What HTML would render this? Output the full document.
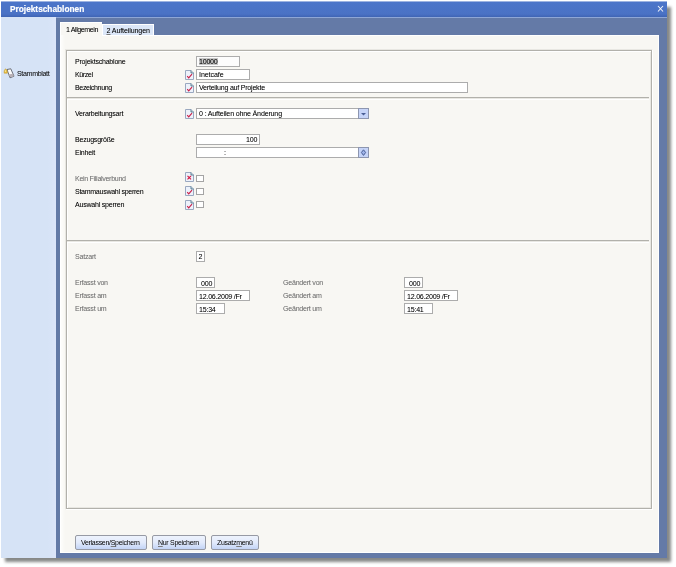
<!DOCTYPE html>
<html><head><meta charset="utf-8">
<style>
*{margin:0;padding:0;box-sizing:border-box}
html,body{width:676px;height:567px;background:#fff;overflow:hidden;position:relative;font-family:"Liberation Sans",sans-serif;font-size:7px;color:#1a1a1a}
.a{position:absolute}
.t{position:absolute;white-space:nowrap;font-size:7px;line-height:8px;letter-spacing:-0.2px;color:#000;text-shadow:0.3px 0 0 rgba(0,0,0,0.22)}
.g{color:#707070;text-shadow:0.3px 0 0 rgba(112,112,112,0.22)}
.box{position:absolute;background:#fff;border:1px solid #acacac;}
.ico{position:absolute;width:9px;height:10px}
.chk{position:absolute;width:8px;height:7px;border:1px solid #a4a4a4;background:#fff}
.btn{position:absolute;height:15px;border:1px solid #979aa4;border-radius:2px;background:linear-gradient(#eef3fd,#e2eafb 50%,#c3d4f6);}
.btn span{position:absolute;white-space:nowrap;font-size:7px;letter-spacing:-0.3px;line-height:8px;color:#000}
u{text-decoration:underline #7a7a7a}
</style></head><body>
<div id="root" style="position:absolute;left:0;top:0;width:676px;height:567px;filter:blur(0.3px)">
<!-- shadow -->
<div class="a" style="left:5px;top:7px;width:666px;height:555px;background:#878988;filter:blur(1.5px)"></div>
<!-- window -->
<div class="a" style="left:1px;top:2px;width:666px;height:556px;background:#647aa7"></div>
<!-- title -->
<div class="a" style="left:1px;top:1px;width:666px;height:1px;background:rgba(76,117,201,0.55)"></div>
<div class="a" style="left:1px;top:2px;width:666px;height:15px;background:linear-gradient(#4c75c9,#4a72c5 80%,#3f64b4)"></div>
<div class="a" style="left:1px;top:17px;width:666px;height:1px;background:#8ea6d6"></div>
<div class="t" style="left:10px;top:5px;font-weight:bold;font-size:8.3px;letter-spacing:0;color:#fff;-webkit-text-stroke:0.2px #fff;text-shadow:none;line-height:9px">Projektschablonen</div>
<svg class="a" style="left:656.5px;top:5px" width="7" height="8" viewBox="0 0 7 8"><path d="M1 1L6 6.5M6 1L1 6.5" stroke="#f4f6fb" stroke-width="1.05"/></svg>
<!-- sidebar -->
<div class="a" style="left:1px;top:17px;width:55px;height:541px;background:linear-gradient(90deg,#d6e3f6 85%,#dce5fa)"></div>
<svg class="a" style="left:3px;top:67.5px" width="12" height="11" viewBox="0 0 12 11"><path d="M4 1.5L7.8 0.8L11 8.2L7 9.8Z" fill="#fbfbfb" stroke="#4a4e58" stroke-width="0.8"/><path d="M5.5 6.5L9.8 5.8L10.8 8.2L7.2 9.3Z" fill="#b8b0b6"/><path d="M1.2 5.2C0.8 3.5 1.5 1.2 2.6 0.9C3.8 1.3 4.6 3.5 4.3 5.2Z" fill="#e8c040" stroke="#c09428" stroke-width="0.5"/><path d="M2.6 1.8L3.2 3.8H2Z" fill="#fff3b8"/></svg>
<div class="t" style="left:17px;top:70px;color:#111;letter-spacing:-0.3px">Stammblatt</div>
<!-- tabs -->
<div class="a" style="left:102px;top:24px;width:52px;height:11px;background:#dce7f8;border:1px solid #fff;border-bottom:none"></div>
<div class="t" style="left:106.5px;top:26.7px;letter-spacing:-0.08px"><u>2</u> Aufteilungen</div>
<div class="a" style="left:60px;top:22px;width:42px;height:14px;background:#f8f7f3;border-left:1px solid #fff;border-top:1px solid #fff"></div>
<div class="t" style="left:66px;top:25.5px;letter-spacing:-0.38px">1 Allgemein</div>
<!-- panel -->
<div class="a" style="left:60px;top:35px;width:599px;height:518px;background:linear-gradient(90deg,#fdfdfb,#f8f7f3 4px);border-left:1px solid #fff;border-right:1px solid #fff;border-bottom:1px solid #fff"></div>
<div class="a" style="left:102px;top:35px;width:557px;height:1px;background:#fff"></div>
<!-- group box -->
<div class="a" style="left:65px;top:49px;width:588px;height:461px;border:1px solid #e8e7e2;border-right-color:#fff;border-bottom-color:#fff"></div>
<div class="a" style="left:66px;top:50px;width:586px;height:459px;border:1px solid #b2b1ab;box-shadow:inset 1px 1px 0 #fff,inset -1px -1px 0 #e8e7e2"></div>
<div class="a" style="left:67px;top:97px;width:582px;height:1px;background:#b2b1ab"></div><div class="a" style="left:67px;top:98px;width:582px;height:1px;background:#e8e7e2"></div>
<div class="a" style="left:67px;top:99px;width:582px;height:1px;background:#fff"></div>
<div class="a" style="left:67px;top:240px;width:582px;height:1px;background:#b2b1ab"></div><div class="a" style="left:67px;top:241px;width:582px;height:1px;background:#e8e7e2"></div>
<div class="a" style="left:67px;top:242px;width:582px;height:1px;background:#fff"></div>

<!-- section 1 -->
<div class="t" style="left:75px;top:58px">Projektschablone</div>
<div class="t" style="left:75px;top:71px;letter-spacing:-0.38px">Kürzel</div>
<div class="t" style="left:75px;top:84px;letter-spacing:-0.33px">Bezeichnung</div>
<div class="box" style="left:196px;top:56px;width:44px;height:11px;background:#fcfcfc"></div>
<div class="a" style="left:199px;top:58px;width:19px;height:7px;background:#c6c6c6"></div>
<div class="t" style="left:199px;top:58px">10000</div>
<div class="box" style="left:196px;top:69px;width:54px;height:11px"></div>
<div class="t" style="left:199px;top:71px;letter-spacing:-0.05px">Inetcafe</div>
<div class="box" style="left:196px;top:82px;width:272px;height:11px"></div>
<div class="t" style="left:199px;top:84px">Verteilung auf Projekte</div>

<svg class="ico" style="left:185px;top:69.5px" width="9" height="10" viewBox="0 0 9 10"><defs></defs><path d="M0.5 0.5H6L8.5 3V9.5H0.5Z" fill="#edf2fb" stroke="#9aa8c0"/><path d="M6 0.5V3H8.5" fill="#d6e4ec" stroke="#4a7288" stroke-width="0.9"/><path d="M2.2 6.2L3.7 7.8L7 4.2" fill="none" stroke="#cc2048" stroke-width="1.15"/></svg><svg class="ico" style="left:185px;top:82.5px" width="9" height="10" viewBox="0 0 9 10"><defs></defs><path d="M0.5 0.5H6L8.5 3V9.5H0.5Z" fill="#edf2fb" stroke="#9aa8c0"/><path d="M6 0.5V3H8.5" fill="#d6e4ec" stroke="#4a7288" stroke-width="0.9"/><path d="M2.2 6.2L3.7 7.8L7 4.2" fill="none" stroke="#cc2048" stroke-width="1.15"/></svg>
<!-- section 2 -->
<div class="t" style="left:75px;top:110px">Verarbeitungsart</div>
<div class="box" style="left:196px;top:108px;width:173px;height:11px"></div>
<div class="t" style="left:199px;top:110px;letter-spacing:-0.13px">0 : Aufteilen ohne Änderung</div>
<svg class="a" style="left:358px;top:108px" width="11" height="11" viewBox="0 0 11 11"><rect x="0.5" y="0.5" width="10" height="10" fill="#c6d4f8" stroke="#8d96b0"/><path d="M3 5H8L5.5 7.5Z" fill="#4a5f96"/></svg>
<svg class="ico" style="left:185px;top:108.5px" width="9" height="10" viewBox="0 0 9 10"><defs></defs><path d="M0.5 0.5H6L8.5 3V9.5H0.5Z" fill="#edf2fb" stroke="#9aa8c0"/><path d="M6 0.5V3H8.5" fill="#d6e4ec" stroke="#4a7288" stroke-width="0.9"/><path d="M2.2 6.2L3.7 7.8L7 4.2" fill="none" stroke="#cc2048" stroke-width="1.15"/></svg>
<div class="t" style="left:75px;top:136px">Bezugsgröße</div>
<div class="box" style="left:196px;top:134px;width:64px;height:11px"></div>
<div class="t" style="left:246px;top:136px">100</div>
<div class="t" style="left:75px;top:149px">Einheit</div>
<div class="box" style="left:196px;top:147px;width:173px;height:11px"></div>
<div class="t" style="left:224px;top:149px">:</div>
<svg class="a" style="left:358px;top:147px" width="11" height="11" viewBox="0 0 11 11"><rect x="0.5" y="0.5" width="10" height="10" fill="#c6d4f8" stroke="#8d96b0"/><path d="M5.5 2.8L7.6 5.5L5.5 8.4L3.4 5.5Z" fill="#9fb4ea" stroke="#4a5f96" stroke-width="1"/></svg>

<div class="t g" style="left:75px;top:175px;letter-spacing:-0.28px">Kein Filialverbund</div>
<div class="t" style="left:75px;top:188px;letter-spacing:-0.26px">Stammauswahl sperren</div>
<div class="t" style="left:75px;top:201px">Auswahl sperren</div>
<div class="chk" style="left:196px;top:175px"></div>
<div class="chk" style="left:196px;top:188px"></div>
<div class="chk" style="left:196px;top:201px"></div>

<svg class="ico" style="left:184.5px;top:172px" width="9" height="10" viewBox="0 0 9 10"><path d="M0.5 0.5H6L8.5 3V9.5H0.5Z" fill="#edf2fb" stroke="#9aa8c0"/><path d="M6 0.5V3H8.5" fill="#d6e4ec" stroke="#4a7288" stroke-width="0.9"/><path d="M2.5 3.8L6 7.3M6 3.8L2.5 7.3" fill="none" stroke="#d41a44" stroke-width="1.15"/></svg><svg class="ico" style="left:184.5px;top:186.2px" width="9" height="10" viewBox="0 0 9 10"><defs></defs><path d="M0.5 0.5H6L8.5 3V9.5H0.5Z" fill="#edf2fb" stroke="#9aa8c0"/><path d="M6 0.5V3H8.5" fill="#d6e4ec" stroke="#4a7288" stroke-width="0.9"/><path d="M2.2 6.2L3.7 7.8L7 4.2" fill="none" stroke="#cc2048" stroke-width="1.15"/></svg><svg class="ico" style="left:184.5px;top:199.8px" width="9" height="10" viewBox="0 0 9 10"><defs></defs><path d="M0.5 0.5H6L8.5 3V9.5H0.5Z" fill="#edf2fb" stroke="#9aa8c0"/><path d="M6 0.5V3H8.5" fill="#d6e4ec" stroke="#4a7288" stroke-width="0.9"/><path d="M2.2 6.2L3.7 7.8L7 4.2" fill="none" stroke="#cc2048" stroke-width="1.15"/></svg>
<!-- section 3 -->
<div class="t g" style="left:75px;top:253px">Satzart</div>
<div class="box" style="left:196px;top:251px;width:9px;height:11px"></div>
<div class="t" style="left:198.5px;top:253px">2</div>

<div class="t g" style="left:75px;top:279px">Erfasst von</div>
<div class="t g" style="left:75px;top:292px">Erfasst am</div>
<div class="t g" style="left:75px;top:305px">Erfasst um</div>
<div class="box" style="left:196px;top:277px;width:19px;height:11px"></div>
<div class="t" style="left:201px;top:280px">000</div>
<div class="box" style="left:196px;top:290px;width:54px;height:11px"></div>
<div class="t" style="left:199px;top:293px">12.06.2009 /Fr</div>
<div class="box" style="left:196px;top:303px;width:29px;height:11px"></div>
<div class="t" style="left:199px;top:306px">15:34</div>

<div class="t g" style="left:283px;top:279px">Geändert von</div>
<div class="t g" style="left:283px;top:292px">Geändert am</div>
<div class="t g" style="left:283px;top:305px">Geändert um</div>
<div class="box" style="left:404px;top:277px;width:19px;height:11px"></div>
<div class="t" style="left:409px;top:280px">000</div>
<div class="box" style="left:404px;top:290px;width:54px;height:11px"></div>
<div class="t" style="left:407px;top:293px">12.06.2009 /Fr</div>
<div class="box" style="left:404px;top:303px;width:29px;height:11px"></div>
<div class="t" style="left:407px;top:306px">15:41</div>

<!-- buttons -->
<div class="btn" style="left:75px;top:535px;width:72px"><span style="left:5px;top:3px">Verlassen/<u>S</u>peichern</span></div>
<div class="btn" style="left:152px;top:535px;width:54px"><span style="left:5px;top:3px"><u>N</u>ur Speichern</span></div>
<div class="btn" style="left:211px;top:535px;width:48px"><span style="left:5px;top:3px">Zusatz<u>m</u>enü</span></div>
</div>
</body></html>
